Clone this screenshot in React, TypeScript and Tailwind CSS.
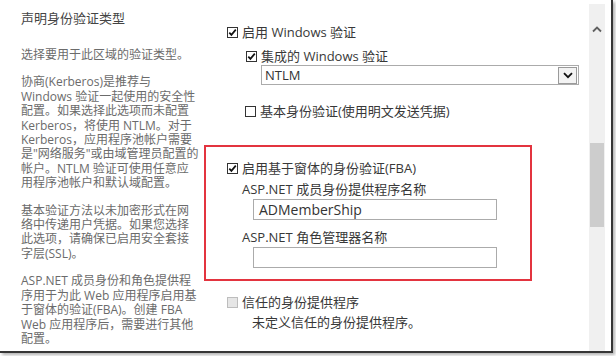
import React from 'react';

const FONT = '"Open Sans", "Noto Sans CJK SC", sans-serif';

const LEFT_PARAS: string[][] = [
  ['选择要用于此区域的验证类型。'],
  [
    '协商(Kerberos)是推荐与',
    'Windows 验证一起使用的安全性',
    '配置。如果选择此选项而未配置',
    'Kerberos，将使用 NTLM。对于',
    'Kerberos，应用程序池帐户需要',
    '是"网络服务"或由域管理员配置的',
    '帐户。NTLM 验证可使用任意应',
    '用程序池帐户和默认域配置。',
  ],
  [
    '基本验证方法以未加密形式在网',
    '络中传递用户凭据。如果您选择',
    '此选项，请确保已启用安全套接',
    '字层(SSL)。',
  ],
  [
    'ASP.NET 成员身份和角色提供程',
    '序用于为此 Web 应用程序启用基',
    '于窗体的验证(FBA)。创建 FBA',
    'Web 应用程序后，需要进行其他',
    '配置。',
  ],
];

function Check({ checked, disabled }: { checked?: boolean; disabled?: boolean }) {
  if (disabled) {
    return <span className="block h-[11px] w-[11px] border border-[#bdbdbd] bg-[#e6e6e6]" />;
  }
  return (
    <svg width="11" height="11" viewBox="0 0 11 11" className="block">
      <rect x="0.5" y="0.5" width="10" height="10" fill="#fff" stroke="#333" />
      {checked && <path d="M2.3 5.6 L4.4 7.9 L8.8 2.6" fill="none" stroke="#111" strokeWidth="1.7" />}
    </svg>
  );
}

function CheckRow({ label, checked, disabled }: { label: string; checked?: boolean; disabled?: boolean }) {
  return (
    <div className="flex h-[16px] items-center gap-[4px] text-[13px] leading-[16px] text-[#383838]">
      <Check checked={checked} disabled={disabled} />
      <span>{label}</span>
    </div>
  );
}

export default function App() {
  return (
    <div className="h-[356px] w-[616px] bg-white" style={{ fontFamily: FONT }}>
      <div className="flex h-[353px] w-[613px] border-b-2 border-r-2 border-[#363636] bg-white shadow-[2px_2px_3px_rgba(0,0,0,0.3)]">
        <div className="flex w-[589px]">
          {/* left description column */}
          <div className="w-[184px] shrink-0 pl-[21px] pt-[10px]">
            <div className="text-[13px] leading-[16px] text-[#444]">声明身份验证类型</div>
            <div className="mt-[22px] flex flex-col gap-[13px]">
              {LEFT_PARAS.map((para, i) => (
                <div key={i} className="text-[12px] leading-[14.4px] text-[#6b6b6b]">
                  {para.map((line, j) => (
                    <div key={j} className="whitespace-nowrap">{line}</div>
                  ))}
                </div>
              ))}
            </div>
          </div>

          {/* right settings column */}
          <div className="ml-[20px] flex w-[385px] flex-col pt-[24px]">
            <div className="pl-[23px]">
              <CheckRow label="启用 Windows 验证" checked />
            </div>
            <div className="mt-[8px] pl-[42px]">
              <CheckRow label="集成的 Windows 验证" checked />
            </div>
            <div className="ml-[57px] mt-[1px] flex h-[20px] w-[318px] items-center justify-between border border-[#ababab] bg-white pl-[3px] pr-[1px]">
              <span className="text-[13px] leading-[16px] text-[#333]">NTLM</span>
              <span className="flex h-[17px] w-[19px] items-center justify-center border border-[#9a9a9a] bg-[#f3f3f3]">
                <svg width="10" height="7" viewBox="0 0 10 7">
                  <path d="M1 1.2 L5 5.2 L9 1.2" fill="none" stroke="#111" strokeWidth="1.8" />
                </svg>
              </span>
            </div>
            <div className="mt-[18px] pl-[41px]">
              <CheckRow label="基本身份验证(使用明文发送凭据)" />
            </div>

            <div className="mt-[26px] h-[136px] w-[328px] border-2 border-[#e3343f] pl-[21px] pt-[13px]">
              <CheckRow label="启用基于窗体的身份验证(FBA)" checked />
              <div className="mt-[5px] pl-[15px] text-[13px] leading-[16px] text-[#383838]">ASP.NET 成员身份提供程序名称</div>
              <div className="ml-[26px] mt-[2px] flex h-[21px] w-[244px] items-center border border-[#ababab] bg-white pl-[5px] text-[14px] text-[#333]">
                ADMemberShip
              </div>
              <div className="mt-[9px] pl-[15px] text-[13px] leading-[16px] text-[#383838]">ASP.NET 角色管理器名称</div>
              <div className="ml-[26px] mt-[2px] h-[21px] w-[244px] border border-[#ababab] bg-white" />
            </div>

            <div className="mt-[13px] pl-[23px]">
              <CheckRow label="信任的身份提供程序" disabled />
            </div>
            <div className="mt-[4px] pl-[48px] text-[13px] leading-[16px] text-[#383838]">未定义信任的身份提供程序。</div>
          </div>
        </div>

        {/* scrollbar */}
        <div className="mt-[4px] flex w-[16px] flex-col items-center bg-[#f0f0f0]">
          <svg width="10" height="7" viewBox="0 0 10 7" className="mt-[22px]">
            <path d="M1 5.5 L5 1.5 L9 5.5" fill="none" stroke="#606060" strokeWidth="1.8" />
          </svg>
          <div className="mt-[110px] h-[84px] w-[14px] bg-[#cdcdcd]" />
        </div>
        <div className="w-[6px]" />
      </div>
    </div>
  );
}
